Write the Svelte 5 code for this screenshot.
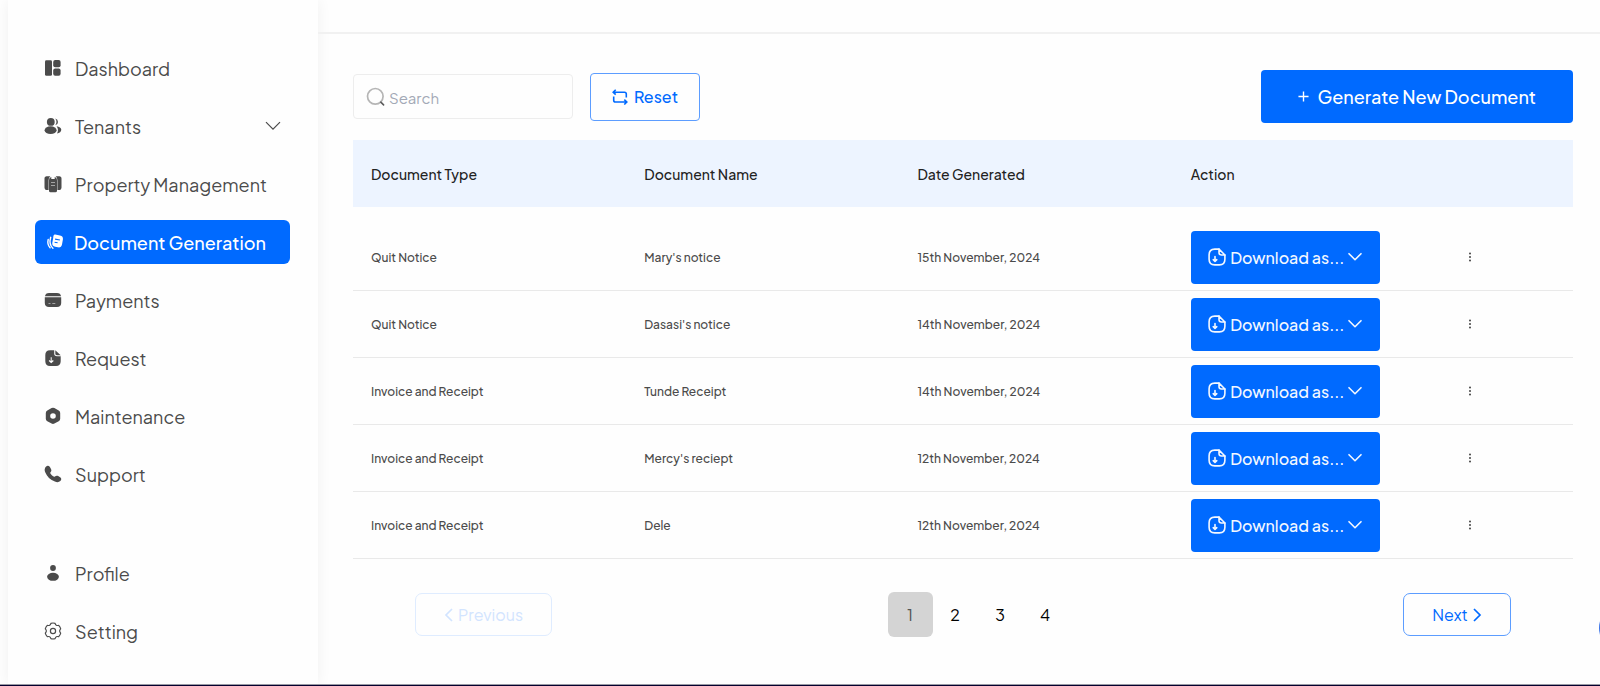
<script>
  const mainLinks = [
    { label: 'Dashboard', icon: 'dashboard' },
    { label: 'Tenants', icon: 'tenants', expandable: true },
    { label: 'Property Management', icon: 'property' },
    { label: 'Document Generation', icon: 'documents', active: true },
    { label: 'Payments', icon: 'payments' },
    { label: 'Request', icon: 'request' },
    { label: 'Maintenance', icon: 'maintenance' },
    { label: 'Support', icon: 'support' }
  ];
  const accountLinks = [
    { label: 'Profile', icon: 'profile' },
    { label: 'Setting', icon: 'setting' }
  ];
  const documents = [
    { type: 'Quit Notice', name: "Mary's notice", date: '15th November, 2024' },
    { type: 'Quit Notice', name: "Dasasi's notice", date: '14th November, 2024' },
    { type: 'Invoice and Receipt', name: 'Tunde Receipt', date: '14th November, 2024' },
    { type: 'Invoice and Receipt', name: "Mercy's reciept", date: '12th November, 2024' },
    { type: 'Invoice and Receipt', name: 'Dele', date: '12th November, 2024' }
  ];
  const pages = [1, 2, 3, 4];
  let page = $state(1);
  let query = $state('');
</script>

{#snippet icon(name)}
  <svg class="icon" viewBox="0 0 18 18" fill="currentColor" aria-hidden="true">
    {#if name === 'dashboard'}
      <rect x="1" y="1.2" width="7" height="15.6" rx="1.4" />
      <rect x="9.2" y="1" width="7.400" height="7.200" rx="2" />
      <rect x="9.2" y="9.400" width="7.400" height="7.400" rx="2" />
    {:else if name === 'tenants'}
      <circle cx="6.8" cy="4.9" r="3.9" />
      <ellipse cx="6.6" cy="13.2" rx="6" ry="3.9" />
      <path d="M11.300 1.500a3.500 3.500 0 0 1 0 6.800 6 6 0 0 0 0-6.800zM12.600 9.300c2.800.2 4.700 1.700 4.700 3.500s-1.700 3.300-4.300 3.700c1.400-2.300 1.300-5-.4-7.200z" />
    {:else if name === 'property'}
      <path d="M2.600 1.300H6.300a5 5 0 0 0-1.700 3.900v9.800H3.100c-1.500 0-2.600-1-2.600-2.600V3.600c0-1.400.8-2.300 2.100-2.300zM11.700 1.300h3.700c1.300 0 2.100.9 2.100 2.300v8.800c0 1.600-1.100 2.600-2.600 2.600h-1.500V5.200a5 5 0 0 0-1.700-3.900z" />
      <path fill-rule="evenodd" d="M7.300 2v1.900h3.400V2a3 3 0 0 1 2.300 3v10.700a1.600 1.600 0 0 1-1.600 1.600H6.600A1.600 1.600 0 0 1 5 15.700V5a3 3 0 0 1 2.300-3zM7 7.500v.5h4v-.5zM7 10.300v.5h4v-.5z" />
    {:else if name === 'documents'}
      <path fill-rule="evenodd" d="M9.200 1.600l4.800.9c2.200.4 3.300 1.900 2.900 4.100l-.9 4.800c-.5 2.300-1.900 3.300-4.100 2.900l-2.700-.5c-2.200-.4-3.300-1.800-2.900-4.100l.9-4.800c.2-2 .3-3.500 2-3.300zM9.200 5.600l-.2 1.100 4.800.9.200-1.100zM8.700 8.700l-.2 1.100 3 .5.200-1.100z" />
      <path d="M4.700 4.300c-1.100 3.700-1.100 8 2.200 11M2.200 6.500c-.8 3.200-.1 6.200 1.900 8.300" fill="none" stroke="currentColor" stroke-width="1.400" stroke-linecap="round" />
    {:else if name === 'payments'}
      <path d="M5 2h8c2.300 0 3.800 1.200 4 3.300H1C1.200 3.200 2.700 2 5 2z" />
      <path fill-rule="evenodd" d="M.8 6.200h16.400V12c0 2.700-1.600 4-4.200 4H5C2.400 16 .8 14.700.8 12zM4.500 11.900v.5h2v-.5zM8.300 11.900v.5h3v-.5z" />
    {:else if name === 'request'}
      <path fill-rule="evenodd" d="M10.200 1.200v3.400c0 1.800 1 2.700 2.800 2.700h3.700v5c0 3-1.600 4.700-4.700 4.700H6c-3.100 0-4.700-1.700-4.700-4.700V6c0-3 1.600-4.800 4.700-4.800zM6.700 8.300v3.700l-1.200-1-.8.900 2.500 2.400 2.500-2.400-.8-.9-1.200 1V8.300z" />
      <path d="M11.300 1.200l5.400 5H13c-1.200 0-1.700-.5-1.700-1.600z" />
    {:else if name === 'maintenance'}
      <path fill-rule="evenodd" d="M7.600 1.100a3 3 0 0 1 2.800 0l4.300 2.400a2.900 2.900 0 0 1 1.500 2.500v5.700a2.900 2.900 0 0 1-1.500 2.500l-4.300 2.400a3 3 0 0 1-2.800 0l-4.300-2.400a2.900 2.900 0 0 1-1.500-2.500V6a2.900 2.900 0 0 1 1.500-2.500zM9 6.200a2.800 2.800 0 1 0 0 5.600 2.800 2.800 0 0 0 0-5.600z" />
    {:else if name === 'support'}
      <path d="M1.900 1.800C3.200.4 4.900.5 5.900 2.100l1.100 1.900c.7 1.300.4 2.300-.5 3.300-.4.500-.3.900.3 1.700.6.900 1.400 1.700 2.300 2.300.8.600 1.300.6 1.800.2 1.100-.8 2-1.100 3.300-.4l1.900 1.200c1.500.9 1.600 2.400.2 3.700-1.300 1.300-3.200 1.500-5.400.6C6.300 14.900 3 11.600 1.200 7.300.3 5.100.6 3.100 1.900 1.800z" />
    {:else if name === 'profile'}
      <circle cx="9" cy="4" r="2.900" />
      <ellipse cx="9" cy="12.800" rx="5.900" ry="4" />
    {:else if name === 'setting'}
      <g fill="none" stroke="currentColor" stroke-width="1.200" stroke-linejoin="round">
        <circle cx="9" cy="9" r="2.600" />
        <path d="M6.900 1.300Q9 .7 11.100 1.300 11.800 4.200 14.700 3.300 16.200 4.900 16.700 6.900 14.600 9 16.700 11.100 16.200 13.100 14.700 14.700 11.800 13.800 11.100 16.700 9 17.300 6.900 16.700 6.200 13.800 3.300 14.700 1.800 13.100 1.300 11.100 3.400 9 1.300 6.900 1.800 4.900 3.300 3.300 6.200 4.200 6.900 1.300z" />
      </g>
    {/if}
  </svg>
{/snippet}

{#snippet navItem(link)}
  <a class="nav-link" class:active={link.active} href="#{link.icon}" aria-current={link.active ? 'page' : undefined}>
    {@render icon(link.icon)}
    <span>{link.label}</span>
    {#if link.expandable}
      <svg class="expand" viewBox="0 0 16 10" aria-hidden="true"><path d="M1 1.200l7 7 7-7" /></svg>
    {/if}
  </a>
{/snippet}

<div class="app">
  <div class="shell">
    <aside>
      <nav aria-label="Main">
        {#each mainLinks as link}{@render navItem(link)}{/each}
      </nav>
      <nav aria-label="Account">
        {#each accountLinks as link}{@render navItem(link)}{/each}
      </nav>
    </aside>

    <div class="content">
      <header></header>
      <main>
        <div class="toolbar">
          <label class="search">
            <svg viewBox="0 0 20 20" aria-hidden="true">
              <circle cx="9.300" cy="9.300" r="7.800" stroke="#b5b5b5" stroke-width="1.700" />
              <path d="M14.800 15.200l2.800 2.700" stroke="#5c5c5c" stroke-width="1.600" stroke-linecap="round" />
            </svg>
            <input type="text" placeholder="Search" aria-label="Search" bind:value={query} />
          </label>
          <button class="reset" type="button" onclick={() => (query = '')}>
            <svg viewBox="0 0 16 16" aria-hidden="true">
              <path d="M1.200 3.200h11.300a1.800 1.800 0 0 1 1.800 1.800v3.600M3.700.7L1.200 3.200l2.500 2.400M14.800 13H3.500a1.800 1.800 0 0 1-1.800-1.800V7.600M12.300 10.600l2.500 2.400-2.500 2.500" />
            </svg>
            Reset
          </button>
          <button class="generate" type="button">
            <svg viewBox="0 0 12 12" aria-hidden="true"><path d="M6 .5v11M.5 6h11" /></svg>
            Generate New Document
          </button>
        </div>

        <table>
          <colgroup>
            <col class="wide" /><col class="wide" /><col class="wide" /><col class="wide" /><col />
          </colgroup>
          <thead>
            <tr>
              <th scope="col">Document Type</th>
              <th scope="col">Document Name</th>
              <th scope="col">Date Generated</th>
              <th scope="col">Action</th>
              <td></td>
            </tr>
          </thead>
          <tbody>
            {#each documents as doc}
              <tr>
                <td>{doc.type}</td>
                <td>{doc.name}</td>
                <td>{doc.date}</td>
                <td>
                  <button class="download" type="button" aria-haspopup="menu">
                    <svg class="file" viewBox="0 0 18 18" aria-hidden="true">
                      <path d="M16.900 7v4.200c0 4-1.600 5.700-5.500 5.700H6.800c-4 0-5.700-1.700-5.700-5.700V6.800c0-4 1.700-5.700 5.700-5.700H11" />
                      <path d="M16.900 7h-3.400C11.600 7 11 6.400 11 4.500V1.100z" />
                      <path d="M7 8.500v4.800M5.200 11.700L7 13.400l1.800-1.700" />
                    </svg>
                    Download as...
                    <svg class="caret" viewBox="0 0 14 10" aria-hidden="true"><path d="M1 1.700l6 6 6-6" /></svg>
                  </button>
                </td>
                <td>
                  <button class="more" type="button" aria-label="More actions">
                    <svg viewBox="0 0 4 10" aria-hidden="true">
                      <circle cx="2" cy="1.500" r="1" /><circle cx="2" cy="5" r="1" /><circle cx="2" cy="8.500" r="1" />
                    </svg>
                  </button>
                </td>
              </tr>
            {/each}
          </tbody>
        </table>

        <div class="pagination">
          <button class="step previous" type="button" disabled={page === 1} onclick={() => (page -= 1)}>
            <svg viewBox="0 0 10 14" aria-hidden="true"><path d="M8 1L2 7l6 6" /></svg>
            Previous
          </button>
          <div class="pages">
            {#each pages as number}
              <button type="button" class:current={number === page} onclick={() => (page = number)}>{number}</button>
            {/each}
          </div>
          <button class="step next" type="button" disabled={page === 4} onclick={() => (page += 1)}>
            Next
            <svg viewBox="0 0 10 14" aria-hidden="true"><path d="M2 1l6 6-6 6" /></svg>
          </button>
        </div>
      </main>
    </div>
  </div>
  <footer></footer>
  <div class="bubble"></div>
</div>

<style>
  :global(body) {
    margin: 0;
    background: #fefefe;
  }
  .app {
    position: relative;
    display: flex;
    flex-direction: column;
    min-height: 100vh;
    overflow: hidden;
    font-family: 'Plus Jakarta Sans', Inter, sans-serif;
    color: #4b4b4b;
  }
  .app *,
  .app {
    box-sizing: border-box;
  }
  button,
  input {
    font: inherit;
  }
  button {
    display: flex;
    align-items: center;
    justify-content: center;
    border: 0;
    background: none;
    cursor: pointer;
  }
  svg {
    flex: none;
    fill: none;
  }
  .shell {
    display: flex;
    flex: 1;
    padding-left: 8px;
  }
  aside {
    flex: none;
    display: flex;
    flex-direction: column;
    gap: 55px;
    width: 310px;
    padding: 46px 28px 24px 27px;
    background: #fefefe;
    box-shadow: 0 0 14px rgba(0, 0, 0, 0.06);
  }
  nav {
    display: flex;
    flex-direction: column;
    gap: 14px;
  }
  .nav-link {
    display: flex;
    align-items: center;
    gap: 13px;
    height: 44px;
    padding: 0 9px;
    border-radius: 6px;
    color: #4b4b4b;
    font-size: 18px;
    white-space: nowrap;
    text-decoration: none;
  }
  .nav-link.active {
    padding-left: 11px;
    gap: 10px;
    background: #006aff;
    color: #fff;
    font-weight: 500;
  }
  .icon {
    width: 18px;
    height: 18px;
    fill: currentColor;
  }
  .expand {
    width: 16px;
    height: 10px;
    margin-left: auto;
    stroke: currentColor;
    stroke-width: 1.2;
  }
  .content {
    flex: 1;
    min-width: 0;
  }
  header {
    height: 34px;
    border-bottom: 2px solid #f1f1f1;
  }
  main {
    padding: 36px 27px 24px 35px;
  }
  .toolbar {
    display: flex;
    align-items: center;
    gap: 17px;
    margin-bottom: 17px;
  }
  .search {
    display: flex;
    align-items: center;
    gap: 3px;
    width: 220px;
    height: 45px;
    padding: 0 12px;
    border: 1px solid #ededed;
    border-radius: 4px;
  }
  .search svg {
    width: 20px;
    height: 20px;
  }
  .search input {
    flex: 1;
    min-width: 0;
    padding: 1px 0 0;
    border: 0;
    outline: 0;
    background: none;
    font-size: 15px;
  }
  .search input::placeholder {
    color: #a3a9b6;
    opacity: 1;
  }
  .reset {
    gap: 6px;
    width: 110px;
    height: 48px;
    border: 1px solid #5c9dff;
    border-radius: 4px;
    color: #006aff;
    font-size: 16px;
    font-weight: 500;
  }
  .reset svg {
    width: 16px;
    height: 16px;
    stroke: currentColor;
    stroke-width: 1.6;
  }
  .generate {
    gap: 8px;
    height: 53px;
    margin-left: auto;
    padding: 0 37px;
    border-radius: 4px;
    background: #006aff;
    color: #fff;
    font-size: 18px;
    font-weight: 500;
  }
  .generate svg {
    width: 11px;
    height: 11px;
    stroke: currentColor;
    stroke-width: 1.5;
  }
  table {
    width: 100%;
    table-layout: fixed;
    border-collapse: separate;
    border-spacing: 0;
  }
  .wide {
    width: 22.4%;
  }
  th,
  td {
    padding: 0 18px;
    text-align: left;
    font-weight: 500;
  }
  thead tr {
    height: 67px;
    background: #edf4ff;
  }
  th {
    color: #222;
    font-size: 14px;
  }
  tbody::before {
    content: '';
    display: block;
    height: 17px;
  }
  tbody td {
    height: 67px;
    border-bottom: 1px solid #e9e9e9;
    font-size: 12px;
  }
  .download {
    gap: 4px;
    width: 189px;
    height: 53px;
    padding: 0;
    border-radius: 4px;
    background: #006aff;
    color: #f3f8ff;
    font-size: 16px;
    font-weight: 500;
    white-space: nowrap;
  }
  .file,
  .caret {
    stroke: currentColor;
    stroke-linejoin: round;
    stroke-linecap: round;
  }
  .file {
    width: 18px;
    height: 18px;
    stroke-width: 1.6;
  }
  .caret {
    width: 14px;
    height: 10px;
    stroke-width: 1.6;
  }
  .more {
    padding: 4px;
  }
  .more svg {
    width: 4px;
    height: 10px;
    fill: #444;
  }
  .pagination {
    display: flex;
    align-items: center;
    justify-content: space-between;
    margin-top: 33px;
    padding: 0 62px;
  }
  .step {
    gap: 4px;
    height: 43px;
    border: 1px solid currentColor;
    border-radius: 7px;
    color: #006aff;
    font-size: 16px;
  }
  .step svg {
    width: 10px;
    height: 14px;
    stroke: currentColor;
    stroke-width: 1.7;
  }
  .previous {
    width: 137px;
    border-color: #dfecff;
  }
  .previous:disabled {
    color: #d2e4ff;
    cursor: default;
  }
  .next {
    width: 108px;
    border-color: #5c9dff;
  }
  .pages {
    display: flex;
  }
  .pages button {
    width: 45px;
    height: 45px;
    border-radius: 6px;
    color: #000;
    font-size: 16px;
  }
  .pages .current {
    background: #d4d4d4;
    color: #555;
  }
  footer {
    height: 2px;
    border-top: 1px solid #9a9aa4;
    background: #05002e;
  }
  .bubble {
    position: absolute;
    right: -47px;
    bottom: 34px;
    width: 48px;
    height: 48px;
    border-radius: 50%;
    background: #3a74e8;
  }
</style>
